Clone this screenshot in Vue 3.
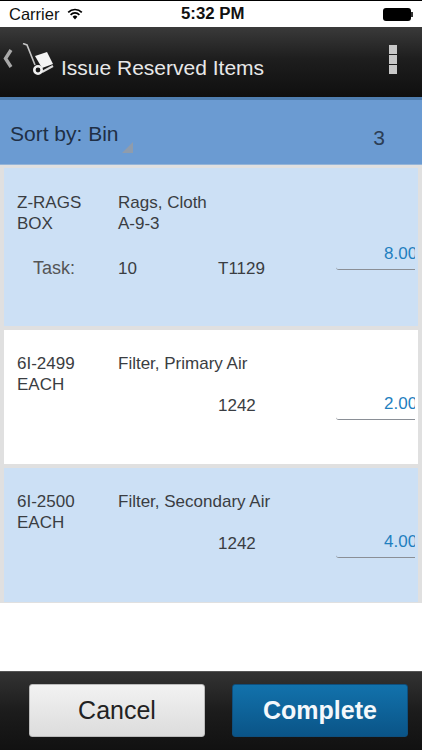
<script setup>
const items = [
  { id: 1, code: 'Z-RAGS', unit: 'BOX', name: 'Rags, Cloth', loc: 'A-9-3', task: '10', ref: 'T1129', qty: '8.00', tint: true },
  { id: 2, code: '6I-2499', unit: 'EACH', name: 'Filter, Primary Air', ref: '1242', qty: '2.00' },
  { id: 3, code: '6I-2500', unit: 'EACH', name: 'Filter, Secondary Air', ref: '1242', qty: '4.00', tint: true }
]
</script>

<template>
  <div class="screen">
    <div class="status">
      <span class="carrier">Carrier</span>
      <svg class="wifi" width="16" height="12" viewBox="0 0 16 12">
        <path d="M8 11.5 5.6 8.8a3.4 3.4 0 0 1 4.8 0z" fill="#000" />
        <path d="M3.6 6.8a6.2 6.2 0 0 1 8.8 0" fill="none" stroke="#000" stroke-width="1.7" />
        <path d="M1.2 4.3a9.6 9.6 0 0 1 13.6 0" fill="none" stroke="#000" stroke-width="1.7" />
      </svg>
      <span class="time">5:32 PM</span>
      <span class="battery"><i></i></span>
    </div>

    <header class="header">
      <svg class="back" width="12" height="24" viewBox="0 0 12 24">
        <path d="M10 4 4.500 12.500 10 21" fill="none" stroke="#a8a8a8" stroke-width="3.400" />
      </svg>
      <svg class="cart" width="34" height="36" viewBox="0 0 34 36">
        <path d="M2 .5 6 2 14 22" fill="none" stroke="#c4c4c4" stroke-width="1.600" />
        <path d="M21 29 32 23" fill="none" stroke="#ddd" stroke-width="2" />
        <path d="M14 13 26 9 32 21 21 25z" fill="#f4f4f4" />
        <circle cx="17" cy="27" r="3.700" fill="none" stroke="#f0f0f0" stroke-width="2.600" />
      </svg>
      <h1 class="title">Issue Reserved Items</h1>
      <div class="menu"><i></i><i></i><i></i></div>
    </header>

    <div class="sortbar">
      <span class="sort">Sort by: Bin<i class="corner"></i></span>
      <span class="count">3</span>
    </div>

    <div class="list">
      <div v-for="item in items" :key="item.id" class="card" :class="{ tint: item.tint, tall: item.task }">
        <div class="line top">
          <span class="code">{{ item.code }}<br>{{ item.unit }}</span>
          <span class="desc">{{ item.name }}<br>{{ item.loc }}</span>
        </div>
        <div class="line bottom">
          <span class="task">{{ item.task ? 'Task:' : '' }}</span>
          <span class="tasknum">{{ item.task }}</span>
          <span class="ref">{{ item.ref }}</span>
          <span class="qty">{{ item.qty }}</span>
        </div>
      </div>
    </div>

    <div class="spacer"></div>

    <footer class="footer">
      <button class="btn cancel">Cancel</button>
      <button class="btn complete">Complete</button>
    </footer>
  </div>
</template>

<style scoped>
.screen {
  width: 422px;
  height: 750px;
  display: flex;
  flex-direction: column;
  overflow: hidden;
  background: #fff;
  font-family: "Liberation Sans", Arial, sans-serif;
  color: #333;
}
.status {
  height: 26px;
  flex: none;
  border-top: 1px solid #000;
  display: flex;
  align-items: center;
  position: relative;
  padding-left: 9px;
  font-size: 16.5px;
  color: #111;
  background: #fff;
}
.wifi {
  margin-left: 8px;
}
.time {
  position: absolute;
  left: 181px;
  font-size: 16.8px;
  font-weight: 700;
}
.battery {
  position: absolute;
  left: 383px;
  top: 7px;
  width: 28px;
  height: 13px;
  border-radius: 3px;
  background: #000;
}
.battery i {
  position: absolute;
  right: -2px;
  top: 4px;
  width: 2px;
  height: 5px;
  background: #333;
}
.header {
  height: 70px;
  flex: none;
  display: flex;
  align-items: center;
  position: relative;
  background: linear-gradient(#3a3a3a, #1e1e1e 45%, #0f0f0f);
}
.back {
  position: absolute;
  left: 1px;
  top: 19px;
}
.cart {
  position: absolute;
  left: 21px;
  top: 16px;
}
.title {
  margin: 0 0 0 61px;
  padding-top: 11px;
  font-size: 21px;
  font-weight: 400;
  color: #e8e8e8;
}
.menu {
  position: absolute;
  left: 389px;
  top: 18px;
  display: flex;
  flex-direction: column;
  gap: 1px;
}
.menu i {
  width: 8px;
  height: 9px;
  background: #c8c8c8;
}
.sortbar {
  height: 64px;
  flex: none;
  display: flex;
  align-items: center;
  justify-content: space-between;
  padding: 0 37px 0 10px;
  background: #6b9bd2;
  border-top: 3px solid #4f7eb0;
  border-bottom: 1px solid #94b4d8;
  color: #1f2f45;
}
.sort {
  position: relative;
  font-size: 21px;
  margin-top: 4px;
}
.corner {
  position: absolute;
  right: -14px;
  bottom: -7px;
  width: 0;
  height: 0;
  border-left: 11px solid transparent;
  border-bottom: 11px solid #8f9cac;
}
.count {
  font-size: 21px;
  margin-top: 12px;
  color: #2c3e55;
}
.list {
  flex: none;
  display: flex;
  flex-direction: column;
  gap: 4px;
  padding: 3px 4px 1px;
  background: #e0e0e0;
}
.card {
  height: 134px;
  padding-left: 13px;
  background: #fff;
  font-size: 17px;
  line-height: 21px;
  color: #3a3d42;
  box-sizing: border-box;
}
.card.tint {
  background: #cce0f5;
}
.card.tall {
  height: 158px;
}
.line {
  display: flex;
  align-items: flex-start;
}
.top {
  padding-top: 23px;
}
.tall .top {
  padding-top: 24px;
}
.code {
  width: 101px;
}
.bottom {
  margin-top: 0;
}
.tall .bottom {
  margin-top: 24px;
}
.task {
  flex: none;
  width: 101px;
  padding-left: 16px;
  box-sizing: border-box;
  font-size: 18px;
  color: #555;
}
.tasknum {
  flex: none;
  width: 100px;
}
.ref {
  flex: none;
  width: 118px;
}
.qty {
  flex: none;
  width: 79px;
  height: 27px;
  margin-top: -2px;
  padding-left: 48px;
  box-sizing: border-box;
  overflow: hidden;
  white-space: nowrap;
  color: #1f7fbf;
  border-bottom: 1px solid #8a8f96;
  border-bottom-left-radius: 3px;
}
.tall .qty {
  margin-top: -15px;
}
.spacer {
  flex: 1;
}
.footer {
  height: 79px;
  flex: none;
  display: flex;
  align-items: center;
  gap: 27px;
  padding: 0 13px 2px 29px;
  box-sizing: border-box;
  border-top: 1px solid #555;
  background: linear-gradient(#333, #1c1c1c 50%, #111);
}
.btn {
  width: 176px;
  height: 53px;
  border-radius: 3px;
  font-family: inherit;
  font-size: 25px;
  padding: 0;
}
.cancel {
  color: #222;
  border: 1px solid #bbb;
  background: linear-gradient(#f2f2f2, #dcdcdc);
}
.complete {
  color: #f4f8fb;
  font-weight: 700;
  border: 1px solid #0e4f7e;
  background: linear-gradient(#1272ac, #0a5487);
}
</style>
